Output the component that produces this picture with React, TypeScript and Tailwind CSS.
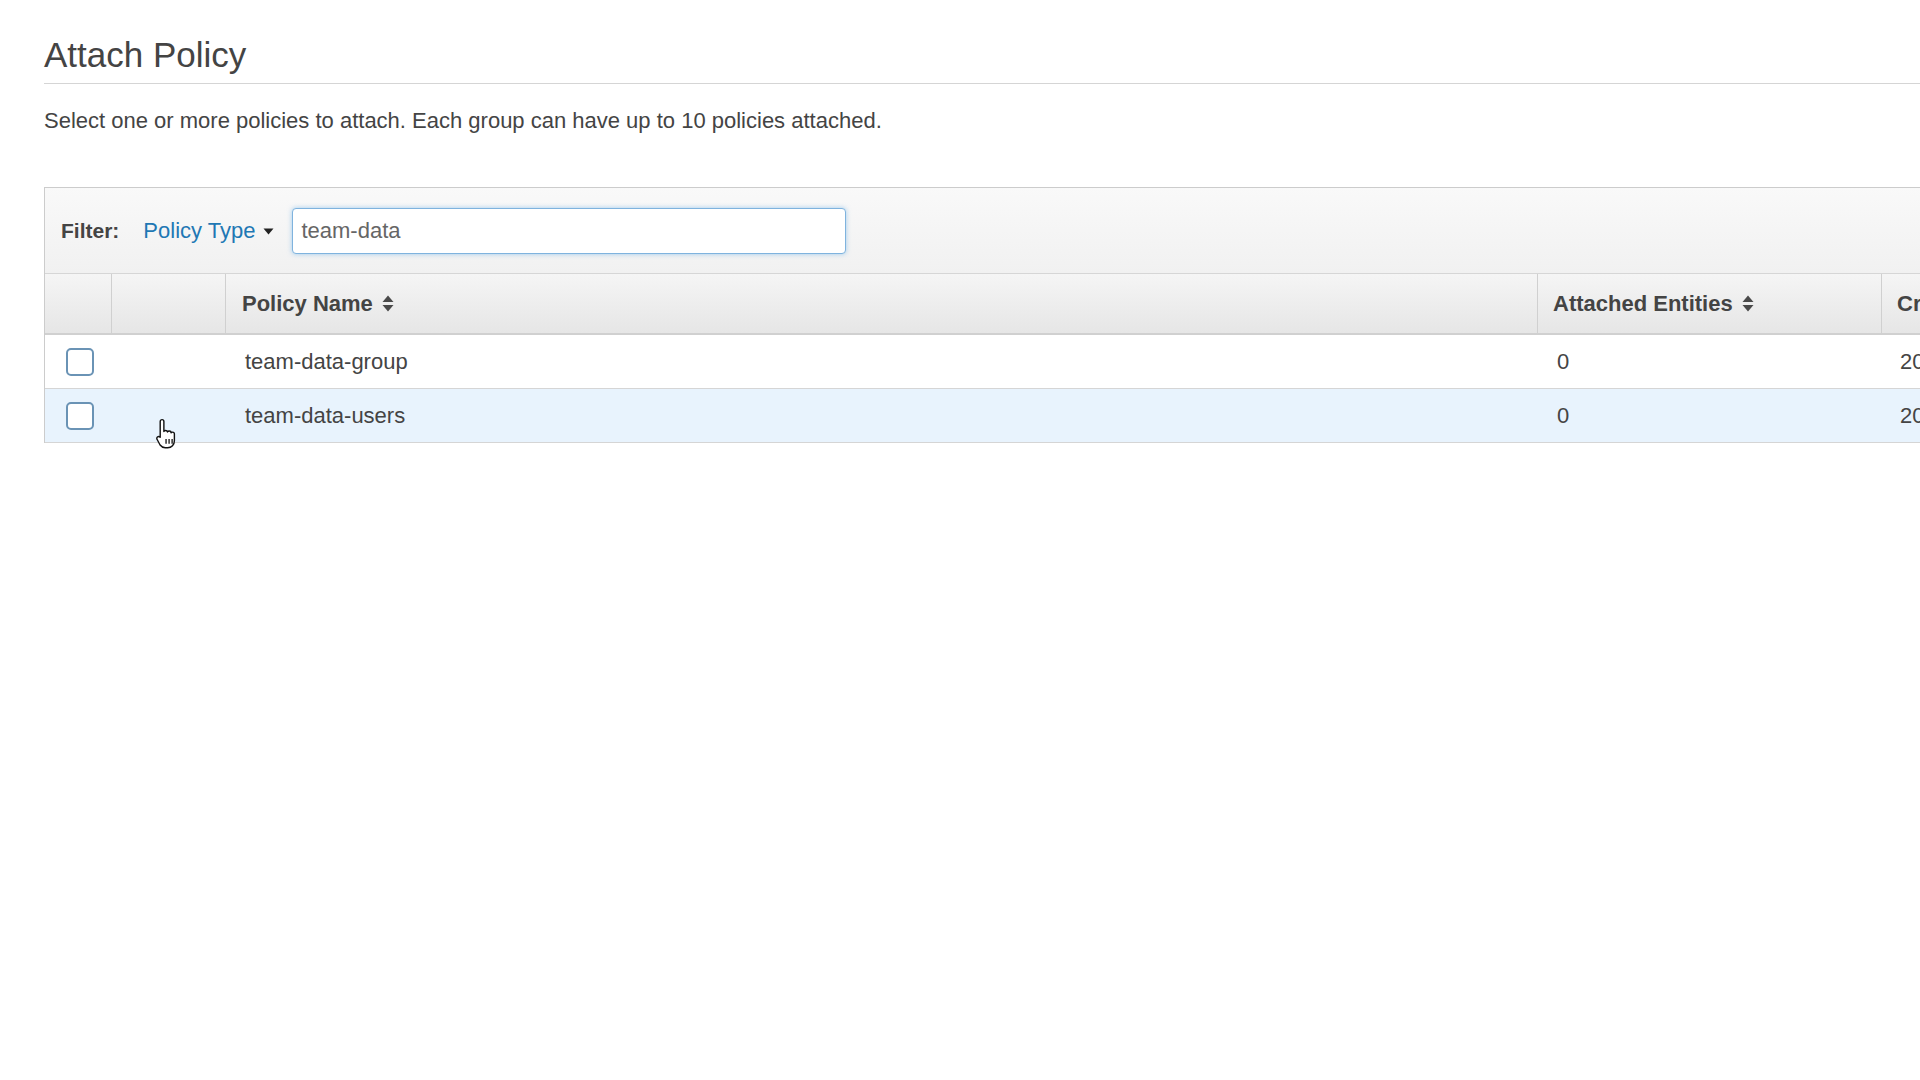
import React from "react";

const font = { fontFamily: '"Liberation Sans", Arial, Helvetica, sans-serif' };

function SortIcon() {
  return (
    <svg width="12" height="19" viewBox="0 0 12 19" className="ml-[9px] inline-block">
      <path d="M0.5 8 L6 1.5 L11.5 8 Z" fill="#4a4a4a" />
      <path d="M0.5 11 L6 17.5 L11.5 11 Z" fill="#4a4a4a" />
    </svg>
  );
}

function Checkbox() {
  return <div className="w-[28px] h-[28px] rounded-[5px] border-2 border-[#6a93b5] bg-white" />;
}

function Cursor() {
  return (
    <svg width="26" height="33" viewBox="0 0 24 30" className="absolute left-[155px] top-[417px]">
      <path
        d="M6.5 2.2c1 0 1.7.8 1.7 1.8v9.2c.3-.6.9-1 1.6-1 .9 0 1.6.6 1.7 1.4.3-.5.9-.9 1.6-.9 1 0 1.7.7 1.7 1.6.3-.4.8-.6 1.4-.6 1 0 1.7.8 1.7 1.8v6.2c0 3.6-2.6 6.4-6.2 6.4h-2.2c-2.2 0-3.6-.9-4.8-2.5L2 20.5c-.6-.8-.4-1.9.4-2.4.8-.5 1.8-.3 2.4.4V4c0-1 .7-1.8 1.7-1.8z"
        fill="#fff"
        stroke="#111"
        strokeWidth="1.3"
        strokeLinejoin="round"
      />
      <path d="M10.2 20v4.5M13 20v4.5M15.8 20v4.5" stroke="#111" strokeWidth="1.2" />
    </svg>
  );
}

export default function App() {
  const rows = [
    { name: "team-data-group", hover: false },
    { name: "team-data-users", hover: true },
  ];
  return (
    <div className="relative w-[1920px] h-[1080px] overflow-hidden bg-white text-[#444]" style={font}>
      <div className="pl-[44px] pt-[35px]">
        <div className="border-b border-[#d5d5d5] pb-[8px]">
          <h1 className="text-[35px] leading-[40px] text-[#444] font-normal">Attach Policy</h1>
        </div>
        <p className="mt-[23px] text-[22px] leading-[28px] text-[#444]">
          Select one or more policies to attach. Each group can have up to 10 policies attached.
        </p>

        <div className="mt-[52px] w-[2200px] border-l border-t border-[#ccc]">
          {/* filter bar */}
          <div className="h-[86px] flex items-center pl-[16px] bg-gradient-to-b from-[#f9f9f9] to-[#f1f1f1] border-b border-[#d6d6d6]">
            <span className="text-[21px] font-bold text-[#444]">Filter:</span>
            <span className="ml-[24px] text-[22px] text-[#1f78b4] flex items-center">
              Policy Type
              <svg width="11" height="7" viewBox="0 0 11 7" className="ml-[8px] mt-[2px]">
                <path d="M0.5 0.5 L10.5 0.5 L5.5 6.5 Z" fill="#222" />
              </svg>
            </span>
            <div className="ml-[18px] w-[554px] h-[46px] rounded-[4px] border border-[#7fb3de] bg-white shadow-[0_0_5px_rgba(102,175,233,0.6)] flex items-center pl-[8px]">
              <span className="text-[22px] text-[#666]">team-data</span>
            </div>
          </div>

          {/* header */}
          <div className="flex h-[61px] bg-gradient-to-b from-[#f5f5f5] to-[#e6e6e6] border-b-2 border-[#d0d0d0] text-[22px] font-bold text-[#444]">
            <div className="w-[67px] border-r border-[#d0d0d0]" />
            <div className="w-[114px] border-r border-[#d0d0d0]" />
            <div className="w-[1312px] border-r border-[#d0d0d0] flex items-center pl-[16px]">
              Policy Name
              <SortIcon />
            </div>
            <div className="w-[344px] border-r border-[#d0d0d0] flex items-center pl-[15px]">
              Attached Entities
              <SortIcon />
            </div>
            <div className="flex-1 flex items-center pl-[15px]">Creation time</div>
          </div>

          {rows.map((r) => (
            <div
              key={r.name}
              className={`flex h-[54px] border-b border-[#d5d5d5] text-[22px] text-[#444] ${r.hover ? "bg-[#e8f3fd]" : "bg-white"}`}
            >
              <div className="w-[67px] flex items-center pl-[21px]">
                <Checkbox />
              </div>
              <div className="w-[114px]" />
              <div className="w-[1312px] flex items-center pl-[19px]">{r.name}</div>
              <div className="w-[344px] flex items-center pl-[19px]">0</div>
              <div className="flex-1 flex items-center pl-[18px]">2019-05-10 14:32 UTC+0200</div>
            </div>
          ))}
        </div>
      </div>
      <Cursor />
    </div>
  );
}
